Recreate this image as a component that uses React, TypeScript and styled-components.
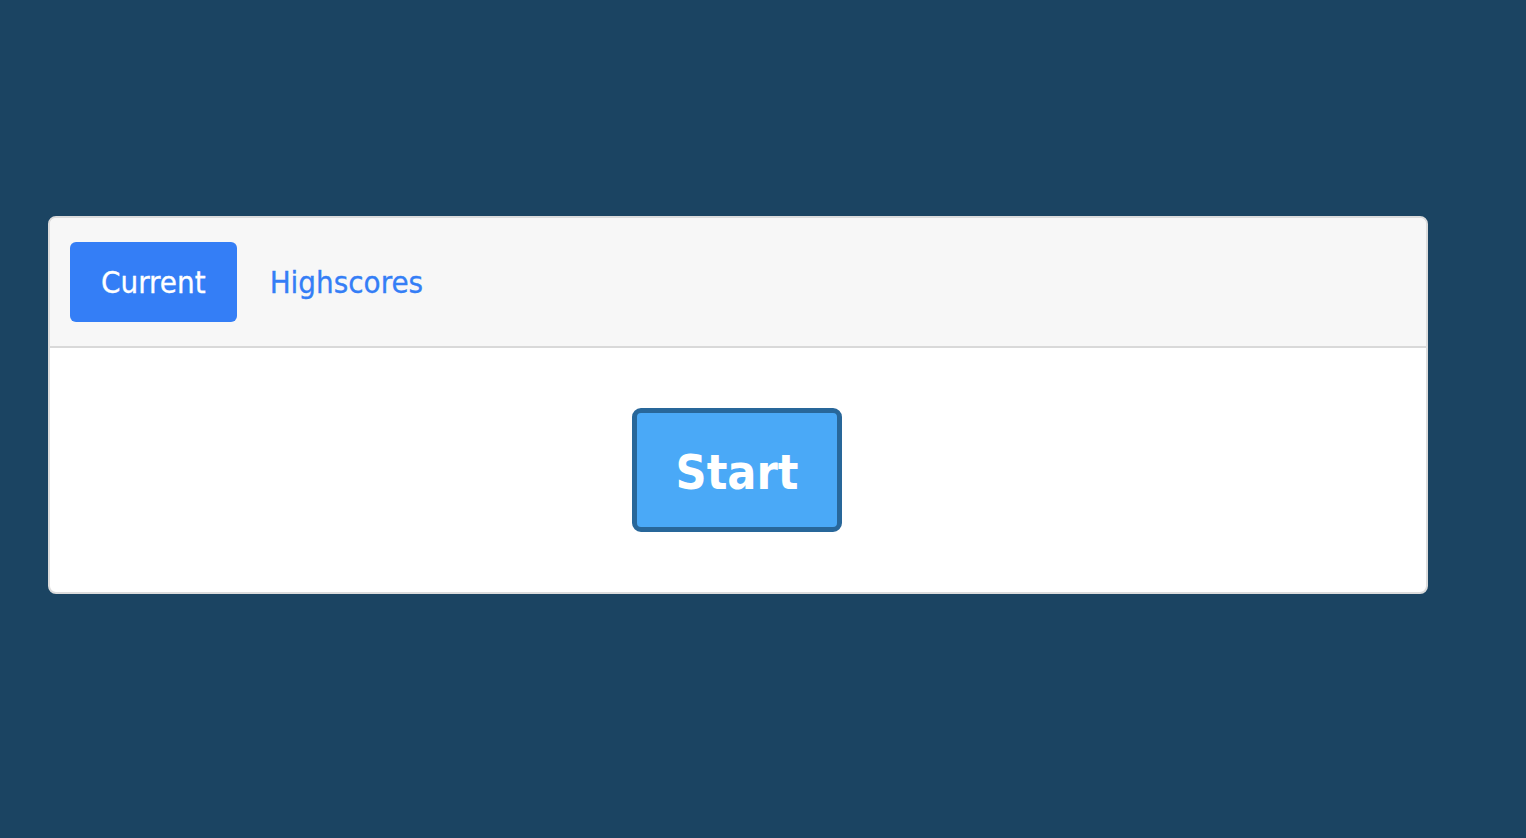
import React, { useState } from "react";
import styled, { createGlobalStyle } from "styled-components";

const Global = createGlobalStyle`
  html, body { margin: 0; padding: 0; background: #1b4462; }
  body { font-family: Tahoma, "DejaVu Sans Condensed", "DejaVu Sans", sans-serif; }
  #root { min-height: 838px; }
`;

const Page = styled.div`
  padding: 216px 98px 0 48px;
`;

const Card = styled.div`
  background: #ffffff;
  border: 2px solid #dcdcdc;
  border-radius: 8px;
  overflow: hidden;
`;

const Header = styled.div`
  display: flex;
  align-items: center;
  gap: 2px;
  background: #f7f7f7;
  border-bottom: 2px solid #d9d9d9;
  padding: 24px 20px 24px;
`;

const Tab = styled.button<{ $active?: boolean }>`
  height: 80px;
  padding: 0 31px;
  border: none;
  border-radius: 6px;
  background: ${(p) => (p.$active ? "#347ef6" : "transparent")};
  color: ${(p) => (p.$active ? "#ffffff" : "#347ef6")};
  font-family: inherit;
  font-size: 31px;
  -webkit-text-stroke: 0.3px currentColor;
  cursor: pointer;
`;

const Body = styled.div`
  display: flex;
  justify-content: center;
  padding: 60px 0 60px 0;
`;

const StartButton = styled.button`
  width: 210px;
  height: 124px;
  margin-left: -2px;
  border: 5px solid #28679a;
  border-radius: 9px;
  background: #4aa9f7;
  color: #ffffff;
  font-family: inherit;
  font-weight: bold;
  font-size: 48px;
  padding: 4px 0 0;
  cursor: pointer;
`;

export default function App() {
  const [tab, setTab] = useState("current");
  return (
    <>
      <Global />
      <Page>
        <Card>
          <Header>
            <Tab $active={tab === "current"} onClick={() => setTab("current")}>
              Current
            </Tab>
            <Tab $active={tab === "highscores"} onClick={() => setTab("highscores")}>
              Highscores
            </Tab>
          </Header>
          <Body>
            <StartButton>Start</StartButton>
          </Body>
        </Card>
      </Page>
    </>
  );
}
